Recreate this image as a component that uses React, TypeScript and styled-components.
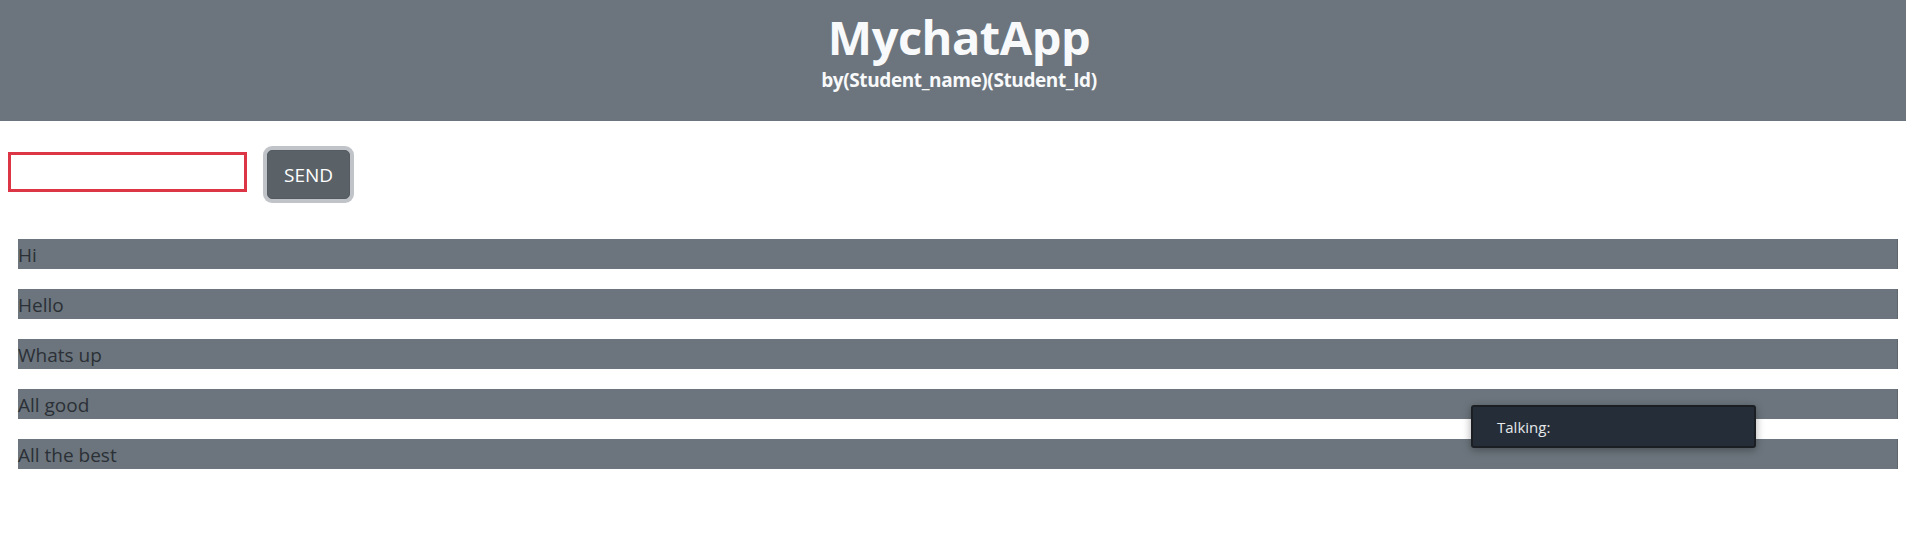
import styled, { createGlobalStyle } from 'styled-components';

const GlobalStyle = createGlobalStyle`
  html, body {
    margin: 0;
    padding: 0;
    background: #fff;
    font-family: "Open Sans", "Noto Sans", sans-serif;
    color: #212529;
  }
`;

const MESSAGES = ['Hi', 'Hello', 'Whats up', 'All good', 'All the best'];

const Page = styled.div`
  position: relative;
  min-height: 555px;
`;

const Header = styled.header`
  background: #6c757d;
  height: 121px;
  padding-left: 12px;
  display: flex;
  flex-direction: column;
  align-items: center;
  color: #f8f9fa;
`;

const Title = styled.h1`
  margin: 7px 0 0;
  font-size: 47px;
  font-weight: 700;
  line-height: 61px;
  letter-spacing: -0.5px;
`;

const Subtitle = styled.h5`
  margin: 0;
  font-size: 19px;
  font-weight: 700;
  line-height: 24px;
  letter-spacing: -0.4px;
`;

const Composer = styled.form`
  display: flex;
  align-items: flex-start;
  gap: 20px;
  padding: 29px 8px 0;
`;

const MessageInput = styled.input`
  box-sizing: border-box;
  width: 239px;
  height: 40px;
  margin-top: 2px;
  border: 3px solid #dc3545;
  background: #fff;
  outline: none;
`;

const SendButton = styled.button`
  box-sizing: border-box;
  height: 49px;
  padding: 0 16px;
  border: 1px solid #545b62;
  border-radius: 5px;
  background: #5a6268;
  color: #fff;
  font-family: inherit;
  font-size: 19px;
  box-shadow: 0 0 0 4px rgba(130, 138, 145, 0.5);
`;

const MessageList = styled.ul`
  list-style: none;
  margin: 40px 8px 0 18px;
  padding: 0;
  display: flex;
  flex-direction: column;
  gap: 20px;
`;

const MessageRow = styled.li`
  height: 30px;
  background: #6c757d;
  font-size: 19px;
  line-height: 32px;
  color: #2b3036;
  box-shadow: inset -1px 0 0 #5f666d;
`;

const TalkingToast = styled.div`
  position: absolute;
  left: 1471px;
  top: 405px;
  box-sizing: border-box;
  width: 285px;
  height: 43px;
  padding: 0 24px;
  display: flex;
  align-items: center;
  background: #252e38;
  border: 2px solid #1b1f24;
  border-radius: 3px;
  box-shadow: 0 2px 8px rgba(0, 0, 0, 0.35);
  color: #e6e8ea;
  font-size: 15px;
`;

export default function App() {
  return (
    <Page>
      <GlobalStyle />
      <Header>
        <Title>MychatApp</Title>
        <Subtitle>by(Student_name)(Student_Id)</Subtitle>
      </Header>
      <Composer onSubmit={(e) => e.preventDefault()}>
        <MessageInput type="text" />
        <SendButton type="submit">SEND</SendButton>
      </Composer>
      <MessageList>
        {MESSAGES.map((m) => (
          <MessageRow key={m}>{m}</MessageRow>
        ))}
      </MessageList>
      <TalkingToast>Talking:</TalkingToast>
    </Page>
  );
}
